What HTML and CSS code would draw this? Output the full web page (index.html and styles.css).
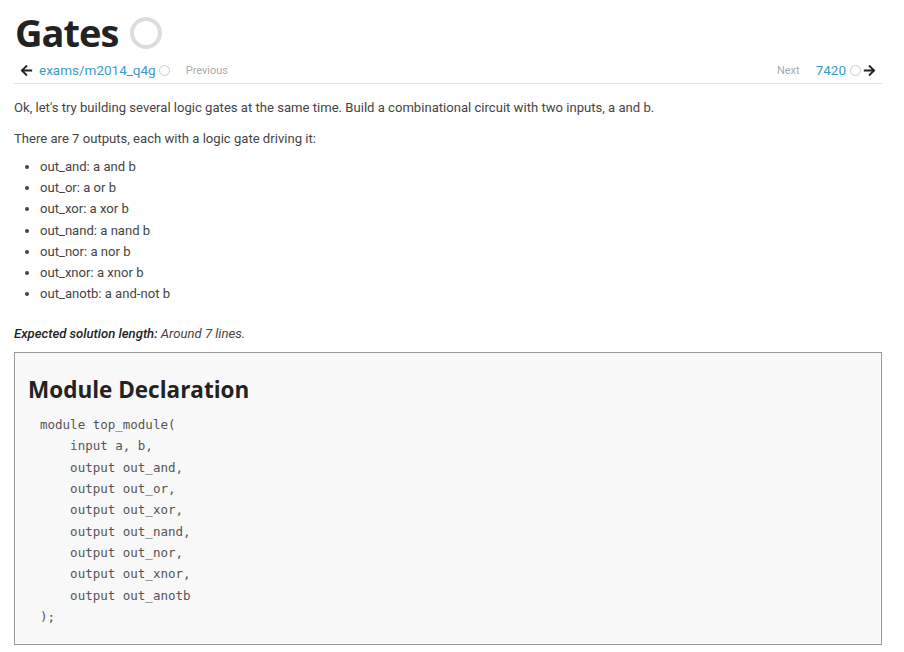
FILE: index.html
```html
<!DOCTYPE html>
<html>
<head>
<meta charset="utf-8">
<link rel="stylesheet" href="styles.css">
</head>
<body>
<div class="page">
  <h1 class="title">Gates <span class="big-circle"></span></h1>
  <div class="nav">
    <div class="nav-left">
      <svg class="arrow" viewBox="0 0 448 512" width="13" height="13"><path d="M257.5 445.1l-22.2 22.2c-9.4 9.4-24.6 9.4-33.9 0L7 273c-9.4-9.4-9.4-24.6 0-33.9L201.4 44.7c9.4-9.4 24.6-9.4 33.9 0l22.2 22.2c9.5 9.5 9.3 25-.4 34.3L136.6 216H424c13.3 0 24 10.7 24 24v32c0 13.3-10.7 24-24 24H136.6l120.5 114.8c9.8 9.3 10 24.8.4 34.3z"/></svg>
      <a class="link">exams/m2014_q4g</a>
      <span class="small-circle"></span>
      <span class="muted">Previous</span>
    </div>
    <div class="nav-right">
      <span class="muted">Next</span>
      <a class="link">7420</a>
      <span class="small-circle"></span>
      <svg class="arrow" viewBox="0 0 448 512" width="13" height="13"><path d="M190.5 66.9l22.2-22.2c9.4-9.4 24.6-9.4 33.9 0L441 239c9.4 9.4 9.4 24.6 0 33.9L246.6 467.3c-9.4 9.4-24.6 9.4-33.9 0l-22.2-22.2c-9.5-9.5-9.3-25 .4-34.3L311.4 296H24c-13.3 0-24-10.7-24-24v-32c0-13.3 10.7-24 24-24h287.4L190.9 101.2c-9.8-9.300-10-24.8-.4-34.3z"/></svg>
    </div>
  </div>
  <p class="para">Ok, let's try building several logic gates at the same time. Build a combinational circuit with two inputs, a and b.</p>
  <p class="para">There are 7 outputs, each with a logic gate driving it:</p>
  <ul class="list">
    <li>out_and: a and b</li>
    <li>out_or: a or b</li>
    <li>out_xor: a xor b</li>
    <li>out_nand: a nand b</li>
    <li>out_nor: a nor b</li>
    <li>out_xnor: a xnor b</li>
    <li>out_anotb: a and-not b</li>
  </ul>
  <p class="para expected"><strong>Expected solution length:</strong> Around 7 lines.</p>
  <div class="decl">
    <h2 class="decl-title">Module Declaration</h2>
<pre class="code">module top_module(
    input a, b,
    output out_and,
    output out_or,
    output out_xor,
    output out_nand,
    output out_nor,
    output out_xnor,
    output out_anotb
);</pre>
  </div>
</div>
</body>
</html>
```
FILE: styles.css
```css
html, body {
  margin: 0;
  padding: 0;
  background: #fff;
}
.page {
  width: 868px;
  margin-left: 14px;
  font-family: Roboto, "Liberation Sans", sans-serif;
  font-size: 13.1px;
  color: #444;
}
.title {
  font-family: "Open Sans", sans-serif;
  font-weight: 700;
  font-size: 38px;
  letter-spacing: -1px;
  line-height: 48px;
  color: #222;
  margin: 8px 0 0 1px;
  display: flex;
  align-items: center;
}
.big-circle {
  display: inline-block;
  width: 24px;
  height: 24px;
  border: 4px solid #ddd;
  border-radius: 50%;
  margin-left: 12px;
  margin-top: 1px;
}
.nav {
  display: flex;
  justify-content: space-between;
  align-items: center;
  margin-top: 5px;
  padding: 0 6px 4px 6px;
  border-bottom: 1px solid #d3e6ee;
  height: 18px;
}
.nav-left, .nav-right {
  display: flex;
  align-items: center;
}
.arrow {
  fill: #222;
}
.nav-left .link {
  margin-left: 6px;
}
.link {
  color: #3d9bc9;
  font-size: 13.5px;
}
.small-circle {
  display: inline-block;
  width: 9px;
  height: 9px;
  border: 1px solid #ccc;
  border-radius: 50%;
  margin-left: 3px;
}
.nav-left .muted {
  margin-left: 16px;
}
.muted {
  color: #aaa;
  font-size: 11px;
}
.nav-right .link {
  margin-left: 16px;
}
.nav-right .small-circle {
  margin-left: 4px;
}
.nav-right .arrow {
  margin-left: 2px;
}
.para {
  margin: 15px 0 0 0;
  line-height: 18px;
}
.para + .para {
  margin-top: 13px;
}
.list {
  margin: 10px 0 0 0;
  padding-left: 26px;
}
.list li {
  line-height: 18px;
  margin-bottom: 3.2px;
}
.expected {
  margin-top: 22px;
  font-style: italic;
}
.expected strong {
  color: #222;
  font-weight: 500;
}
.decl {
  margin-top: 9px;
  border: 1px solid #999;
  background: #f8f8f8;
  padding: 14px 13px 17px 13px;
}
.decl-title {
  font-family: "Open Sans", sans-serif;
  font-weight: 700;
  font-size: 22.5px;
  color: #222;
  line-height: 32px;
  margin: 7px 0 8px 0;
}
.code {
  margin: 0;
  padding-left: 12px;
  font-family: "DejaVu Sans Mono", monospace;
  font-size: 12.5px;
  line-height: 21.3px;
  color: #555;
}
```
